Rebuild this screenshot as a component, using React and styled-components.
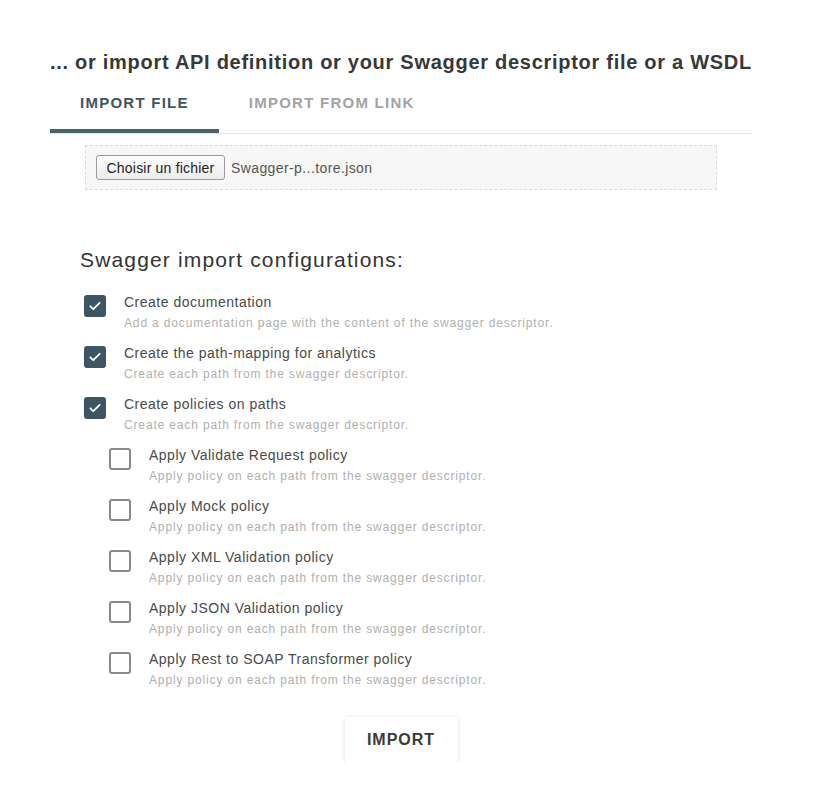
import React from 'react';
import styled, { createGlobalStyle } from 'styled-components';

const GlobalStyle = createGlobalStyle`
  body {
    margin: 0;
    background: #fff;
    font-family: "Liberation Sans", Arial, sans-serif;
  }
`

const Page = styled.div`
  width: 702px;
  padding: 50px 0 0 50px;
`

const Title = styled.h2`
  margin: 0;
  font-size: 20px;
  font-weight: 700;
  letter-spacing: 0.72px;
  color: #383838;
  line-height: 24px;
  white-space: nowrap;
`

const Tabs = styled.div`
  display: flex;
  margin-top: 10px;
  border-bottom: 1px solid #e6e6e6;
`

const Tab = styled.div`
  padding: 10px 30px 21px;
  font-size: 15px;
  font-weight: 700;
  letter-spacing: 1.25px;
  line-height: 18px;
  color: ${p => (p.active ? '#3f5561' : '#a3a3a3')};
  box-shadow: ${p => (p.active ? 'inset 0 -4px 0 #4b626d' : 'none')};
`

const FileBox = styled.div`
  display: flex;
  align-items: center;
  gap: 6px;
  width: 632px;
  height: 45px;
  margin: 11px 0 0 35px;
  padding: 0 10px;
  box-sizing: border-box;
  background: #f7f7f7;
  border: 1px dashed #dcdcdc;
`

const FileButton = styled.button`
  width: 129px;
  height: 25px;
  padding: 0;
  font-family: inherit;
  font-size: 14px;
  letter-spacing: 0.2px;
  color: #222;
  background: linear-gradient(#fdfdfd, #ececec);
  border: 1px solid #9a9a9a;
  border-radius: 3px;
`

const FileName = styled.span`
  font-size: 14px;
  letter-spacing: 0.4px;
  color: #555;
`

const SubTitle = styled.h3`
  margin: 58px 0 0 30px;
  font-size: 21px;
  font-weight: 400;
  letter-spacing: 1.15px;
  color: #333;
  line-height: 24px;
`

const Options = styled.div`
  display: flex;
  flex-direction: column;
  gap: 15px;
  margin-top: 23px;
`

const Option = styled.div`
  display: flex;
  align-items: flex-start;
  gap: 18px;
  padding-left: ${p => (p.nested ? 59 : 34)}px;
`

const Box = styled.div`
  flex: none;
  display: flex;
  align-items: center;
  justify-content: center;
  width: 22px;
  height: 22px;
  box-sizing: border-box;
  border-radius: 3px;
  background: ${p => (p.checked ? '#3e5662' : '#fff')};
  border: 2px solid ${p => (p.checked ? '#3e5662' : '#8a8a8a')};
`

const Texts = styled.div`
  display: flex;
  flex-direction: column;
  gap: 6px;
`

const Label = styled.span`
  font-size: 14px;
  letter-spacing: 0.5px;
  line-height: 15px;
  color: #4a4a4a;
`

const Hint = styled.span`
  font-size: 12px;
  letter-spacing: 0.85px;
  line-height: 15px;
  color: #b0b0b0;
`

const Footer = styled.div`
  display: flex;
  justify-content: center;
  margin-top: 29px;
`

const ImportButton = styled.button`
  width: 113px;
  height: 45px;
  font-family: inherit;
  font-size: 16px;
  font-weight: 700;
  letter-spacing: 1px;
  color: #3a3a3a;
  background: #fff;
  border: none;
  border-radius: 2px;
  box-shadow: 0 1px 4px rgba(0, 0, 0, 0.15);
`

const Check = () => (
  <svg width="14" height="14" viewBox="0 0 24 24" fill="none" stroke="#fff" strokeWidth="3" strokeLinecap="round" strokeLinejoin="round">
    <path d="M4 12.5l5 5L20 6.5" />
  </svg>
)

const policyHint = 'Apply policy on each path from the swagger descriptor.'

const options = [
  { label: 'Create documentation', hint: 'Add a documentation page with the content of the swagger descriptor.', checked: true },
  { label: 'Create the path-mapping for analytics', hint: 'Create each path from the swagger descriptor.', checked: true },
  { label: 'Create policies on paths', hint: 'Create each path from the swagger descriptor.', checked: true },
  { label: 'Apply Validate Request policy', hint: policyHint, nested: true },
  { label: 'Apply Mock policy', hint: policyHint, nested: true },
  { label: 'Apply XML Validation policy', hint: policyHint, nested: true },
  { label: 'Apply JSON Validation policy', hint: policyHint, nested: true },
  { label: 'Apply Rest to SOAP Transformer policy', hint: policyHint, nested: true },
]

function App() {
  return (
    <>
      <GlobalStyle />
      <Page>
        <Title>... or import API definition or your Swagger descriptor file or a WSDL</Title>
        <Tabs>
          <Tab active>IMPORT FILE</Tab>
          <Tab>IMPORT FROM LINK</Tab>
        </Tabs>
        <FileBox>
          <FileButton>Choisir un fichier</FileButton>
          <FileName>Swagger-p...tore.json</FileName>
        </FileBox>
        <SubTitle>Swagger import configurations:</SubTitle>
        <Options>
          {options.map(o => (
            <Option key={o.label} nested={o.nested}>
              <Box checked={o.checked}>{o.checked && <Check />}</Box>
              <Texts>
                <Label>{o.label}</Label>
                <Hint>{o.hint}</Hint>
              </Texts>
            </Option>
          ))}
        </Options>
        <Footer>
          <ImportButton>IMPORT</ImportButton>
        </Footer>
      </Page>
    </>
  );
}

export default App;
